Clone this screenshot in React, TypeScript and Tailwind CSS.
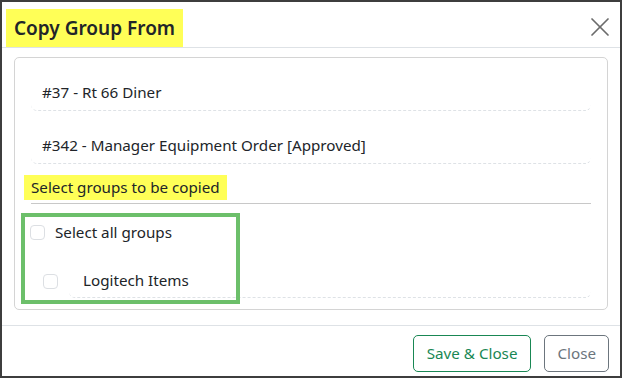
import { X } from 'lucide-react';

function Checkbox() {
  return <span className="block w-[15px] h-[15px] rounded-[4px] border border-[#dcdfe3] bg-white shrink-0"></span>;
}

export default function App() {
  const orders = ['#37 - Rt 66 Diner', '#342 - Manager Equipment Order [Approved]'];

  return (
    <div className="w-[623px] h-[378px] bg-white" style={{ fontFamily: '"Noto Sans", sans-serif' }}>
      <div className="w-[622px] h-[378px] border-2 border-[#3d3d3d] flex flex-col text-[#212529]">
        {/* header */}
        <div className="h-[46px] flex justify-between border-b border-[#dee2e6] shrink-0">
          <div className="self-end ml-[4px] h-[38px] px-[8px] bg-[#ffff57] flex items-center">
            <h2 className="text-[19px] font-semibold leading-none">Copy Group From</h2>
          </div>
          <button className="mr-[4px] mt-[9px] self-start text-[#6b6b6b]">
            <X size={32} strokeWidth={1.3} />
          </button>
        </div>

        {/* body */}
        <div className="flex-1 px-[12px] pt-[9px]">
          <div className="relative h-[253px] border border-[#d4d4d4] rounded-[5px] px-[16px]">
            {orders.map((o) => (
              <div key={o} className="pt-[23px] pb-[7px] pl-[11px] border-b border-dashed border-[#dee2e6] rounded-b-[6px] text-[15.2px] leading-[22px]">
                {o}
              </div>
            ))}

            <div className="mt-[11px] ml-[-7px]">
              <span className="inline-flex items-center h-[25px] px-[7px] bg-[#ffff57] text-[15.2px]">
                Select groups to be copied
              </span>
            </div>
            <div className="mt-[3px] border-b border-[#c8c8c8]"></div>

            <div className="flex items-center gap-[10px] mt-[20px] ml-[-1px] text-[15.2px] leading-[17px]">
              <Checkbox />
              <span>Select all groups</span>
            </div>

            <div className="flex items-stretch mt-[32px]">
              <div className="ml-[12px] mt-[1px]">
                <Checkbox />
              </div>
              <div className="flex-1 ml-[11px] pl-[14px] pb-[8px] border-b border-dashed border-[#dee2e6] rounded-b-[6px] text-[15.2px] leading-[18px] mt-[-2px]">
                Logitech Items
              </div>
            </div>

            {/* annotation box */}
            <div className="absolute left-[6px] top-[155px] w-[219px] h-[91px] border-[4px] border-[#6cbf6a] pointer-events-none"></div>
          </div>
        </div>

        {/* footer */}
        <div className="h-[51px] border-t border-[#dee2e6] flex justify-end items-start gap-[13px] pt-[9px] pr-[11px] shrink-0">
          <button className="h-[37px] px-[13px] rounded-[5px] border border-[#198754] text-[#198754] text-[15.2px]">
            Save &amp; Close
          </button>
          <button className="h-[37px] px-[12px] rounded-[5px] border border-[#6c757d] text-[#6c757d] text-[15.2px]">
            Close
          </button>
        </div>
      </div>
    </div>
  );
}
